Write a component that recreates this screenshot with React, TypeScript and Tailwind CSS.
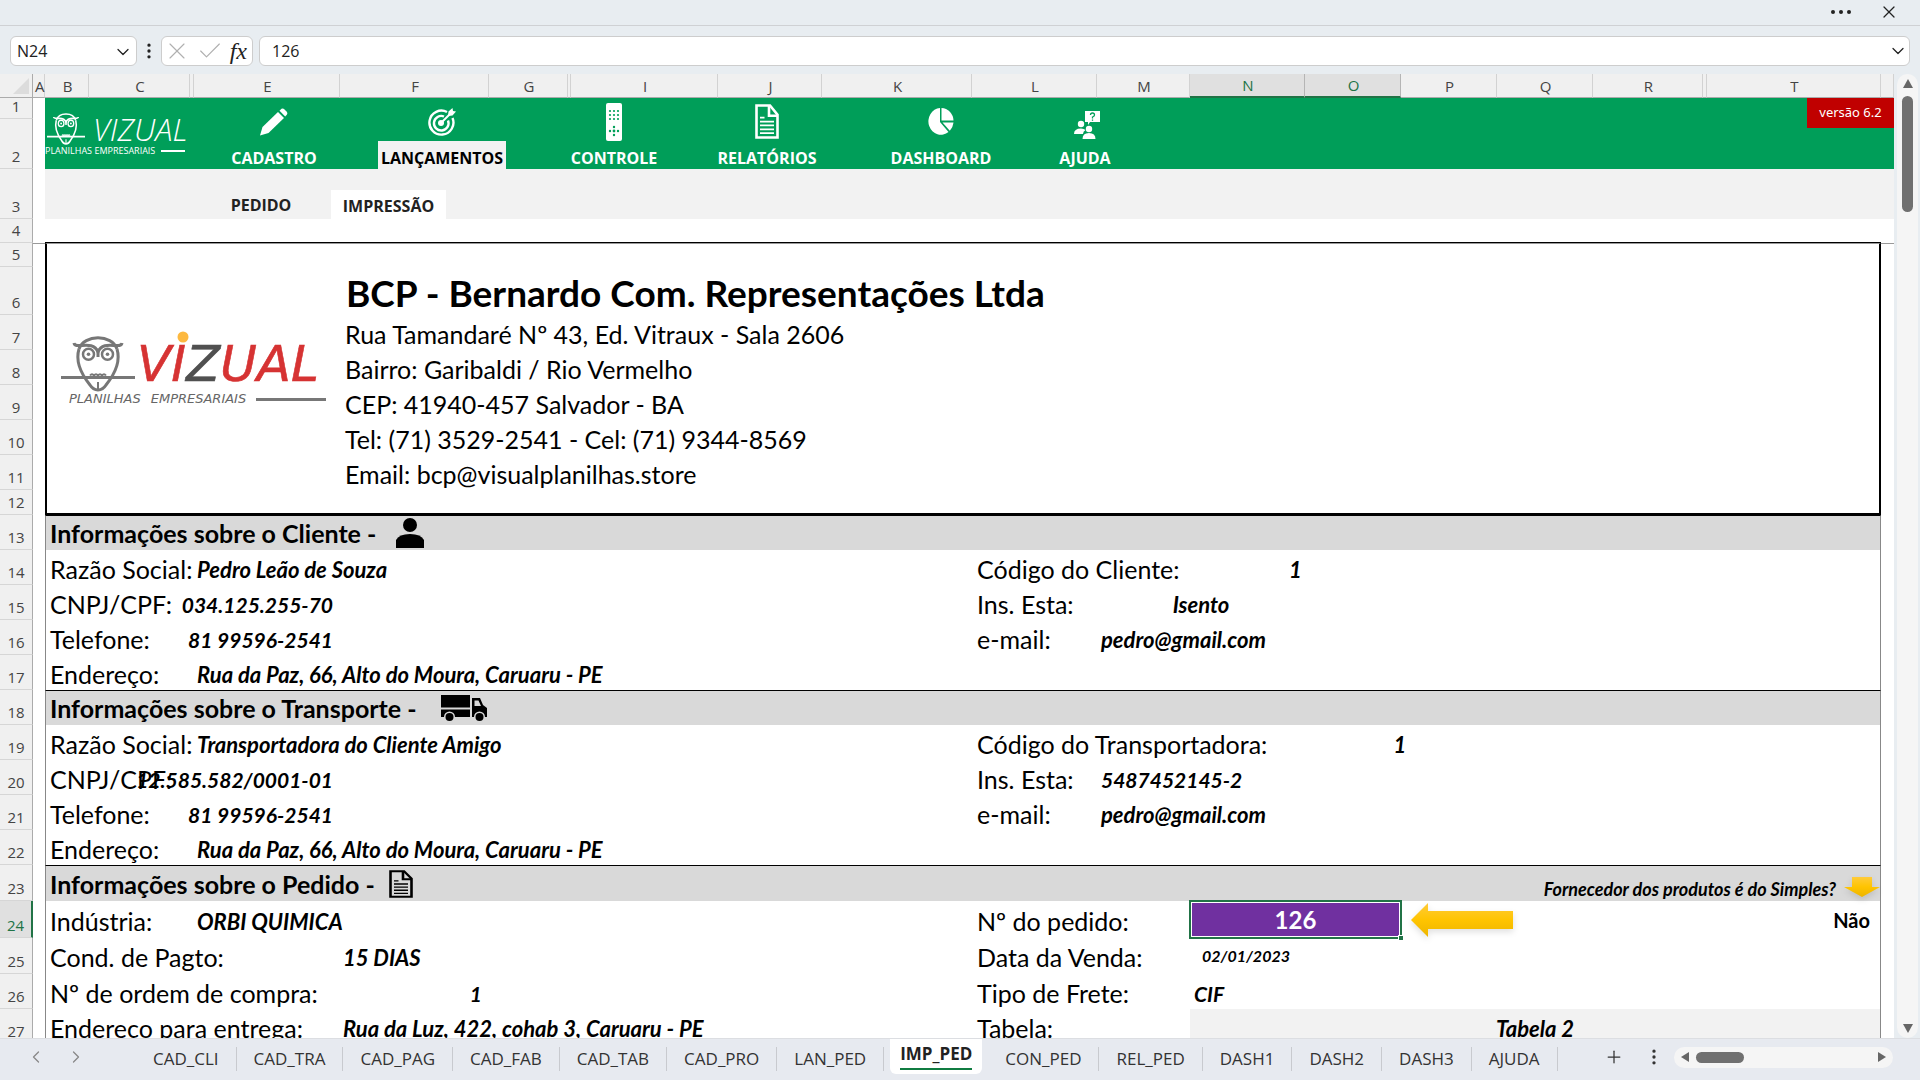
import type { ReactNode } from 'react';
import { Check, ChevronDown, ChevronLeft, ChevronRight, MoreVertical, Plus, X } from 'lucide-react';

const COLUMNS = [
  { name: 'A', width: 'w-[12px]' },
  { name: 'B', width: 'w-[44px]' },
  { name: 'C', width: 'w-[101px]' },
  { name: '', width: 'w-[4px]' },
  { name: 'E', width: 'w-[146px]' },
  { name: 'F', width: 'w-[149px]' },
  { name: 'G', width: 'w-[79px]' },
  { name: '', width: 'w-[3px]' },
  { name: 'I', width: 'w-[147px]' },
  { name: 'J', width: 'w-[104px]' },
  { name: 'K', width: 'w-[150px]' },
  { name: 'L', width: 'w-[125px]' },
  { name: 'M', width: 'w-[93px]' },
  { name: 'N', width: 'w-[115px]' },
  { name: 'O', width: 'w-[96px]' },
  { name: 'P', width: 'w-[96px]' },
  { name: 'Q', width: 'w-[96px]' },
  { name: 'R', width: 'w-[110px]' },
  { name: '', width: 'w-[4px]' },
  { name: 'T', width: '' },
  { name: '', width: 'w-[13px]' },
];

const SHEETS = [
  'CAD_CLI', 'CAD_TRA', 'CAD_PAG', 'CAD_FAB', 'CAD_TAB', 'CAD_PRO', 'LAN_PED',
  'IMP_PED', 'CON_PED', 'REL_PED', 'DASH1', 'DASH2', 'DASH3', 'AJUDA',
];

const COMPANY = [
  'Rua Tamandaré Nº 43, Ed. Vitraux - Sala 2606',
  'Bairro: Garibaldi / Rio Vermelho',
  'CEP: 41940-457 Salvador - BA',
  'Tel: (71) 3529-2541 - Cel: (71) 9344-8569',
  'Email: bcp@visualplanilhas.store',
];

const LABEL = "p-0 pt-0.5 font-['Lato',sans-serif] text-[25px] leading-8 whitespace-nowrap";
const VALUE = "p-0 pt-1 font-['Lato',sans-serif] leading-[30px] font-bold italic whitespace-nowrap";

function RowHead({ n, height, active }: { n: number; height: string; active?: boolean }) {
  return (
    <th
      scope="row"
      className={`${height} p-0 pb-1 align-bottom text-center text-[15px] leading-4 font-normal border-b border-[#d6d6d6] ${
        active ? 'bg-[#e0e0e0] text-[#217346] border-r-2 border-r-[#217346]' : 'bg-[#f0f0f0] text-[#444] border-r border-r-[#ababab]'
      }`}
    >
      {n}
    </th>
  );
}

function DocIcon({ className }: { className: string }) {
  return (
    <svg viewBox="0 0 24 36" preserveAspectRatio="none" className={className} fill="none" stroke="currentColor">
      <path d="M1.5 1.5H15L22.5 11V34.5H1.5Z" strokeWidth="2.6" />
      <path d="M14 2V12H22" strokeWidth="2.6" />
      <path d="M5 14H9.5M5 18H19M5 22H19M5 26H19M5 30H19" strokeWidth="1.8" />
    </svg>
  );
}

function Owl({ className }: { className: string }) {
  return (
    <svg viewBox="0 0 74 56" preserveAspectRatio="none" className={className} fill="none" stroke="currentColor" strokeWidth="3">
      <path d="M18 13C23-2 51-2 56 13" />
      <path d="M13 7C14 14 32 3 37 16C42 3 60 14 61 7" />
      <path d="M18 13C14 26 21 39 29 49C33 55.500 41 55.500 45 49C53 39 60 26 56 13" />
      <path d="M37 15V21" />
      <circle cx="27.500" cy="18.300" r="5.500" strokeWidth="2.500" />
      <circle cx="46.500" cy="18.300" r="5.500" strokeWidth="2.500" />
      <circle cx="27.500" cy="18.300" r="1.800" fill="currentColor" stroke="none" />
      <circle cx="46.500" cy="18.300" r="1.800" fill="currentColor" stroke="none" />
      <path d="M0 41.500H74" />
      <path d="M29 39.500q2-2.500 4 0q2-2.500 4 0q2-2.500 4 0q2-2.500 4 0M37 46V53" strokeWidth="2" />
    </svg>
  );
}

function PencilIcon() {
  return (
    <svg viewBox="0 0 28 28" className="h-7 w-7" fill="currentColor">
      <path d="M0 27.500L2.500 19L18 4L24 10L8.500 25Z" />
      <path d="M19.500 2.700L21.500 .8Q23 0 24.500 1.400L26.800 3.700Q28 5.200 26.800 6.700L25.200 8.500Z" />
    </svg>
  );
}

function TargetIcon() {
  return (
    <svg viewBox="0 0 28 28" className="h-7 w-7" fill="none" stroke="currentColor">
      <path d="M19 4A12 12 0 1 0 24.500 10" strokeWidth="2.4" />
      <path d="M16 8.500A7.300 7.300 0 1 0 20 12.500" strokeWidth="2.400" />
      <circle cx="13" cy="15" r="3" fill="currentColor" stroke="none" />
      <path d="M13 15L23 5" strokeWidth="2" />
      <path d="M20 8L20.500 3.500L24.500 0L25 3L28 3.500L24.500 7.500Z" fill="currentColor" stroke="none" />
    </svg>
  );
}

function RemoteIcon() {
  return (
    <svg viewBox="0 0 16 38" className="h-[38px] w-4">
      <rect width="16" height="38" rx="2" fill="#fff" />
      <g fill="#009e59">
        {[8, 12, 16].map((y) =>
          [4, 8, 12].map((x) => <circle key={`${x}-${y}`} cx={x} cy={y} r="1.100" />)
        )}
        <circle cx="8" cy="24" r="1.200" />
        <circle cx="8" cy="28" r="1.400" />
        <circle cx="8" cy="32" r="1.200" />
        <circle cx="4" cy="28" r="1.200" />
        <circle cx="12" cy="28" r="1.200" />
      </g>
    </svg>
  );
}

function PieIcon() {
  return (
    <svg viewBox="0 0 26 27" className="h-[27px] w-[26px]" fill="currentColor">
      <path d="M12 0V14L20.500 24A12.500 13.400 0 1 1 12 0Z" />
      <path d="M13.500 0A12.500 13 0 0 1 25.500 12.500H13.500Z" />
      <path d="M14.500 14.500H25.500Q25 19.500 21.800 22.800Z" />
    </svg>
  );
}

function HelpIcon() {
  return (
    <svg viewBox="0 0 26 28" className="mt-1.5 ml-1 h-7 w-[26px]" fill="currentColor">
      <path d="M11 0H26V11H16L14 14V11H11Z" />
      <path d="M16.500 4Q16.500 2 18.500 2T20.500 4Q20.500 5.300 18.500 6V7.500M18.500 8.500V9.800" fill="none" stroke="#009e59" strokeWidth="1.300" />
      <circle cx="7" cy="13" r="3.200" />
      <path d="M0 23Q0 17.500 7 17.500Q10 17.500 11.500 19Q9 20.500 9 23Z" />
      <circle cx="15" cy="18" r="3.200" />
      <path d="M8.500 28Q8.500 22 15 22T21.500 28Z" />
    </svg>
  );
}

const MENU: { label: string; icon: ReactNode; gap: string; active?: boolean }[] = [
  { label: 'CADASTRO', icon: <PencilIcon />, gap: '' },
  { label: 'LANÇAMENTOS', icon: <TargetIcon />, gap: 'ml-10', active: true },
  { label: 'CONTROLE', icon: <RemoteIcon />, gap: 'ml-11' },
  { label: 'RELATÓRIOS', icon: <DocIcon className="h-[35px] w-6" />, gap: 'ml-[25px]' },
  { label: 'DASHBOARD', icon: <PieIcon />, gap: 'ml-[46px]' },
  { label: 'AJUDA', icon: <HelpIcon />, gap: 'ml-4' },
];

function MainMenu() {
  return (
    <nav className="relative flex h-[71px] bg-[#009e59] text-white">
      <div className="w-[165px] pt-3.5">
        <div className="flex h-[34px] items-center">
          <Owl className="ml-0.5 h-8 w-[38px]" />
          <span className="ml-2 text-[31px] leading-[34px] font-light italic">VIZUAL</span>
        </div>
        <div className="flex items-center text-[9px] leading-[10px] whitespace-nowrap">
          PLANILHAS EMPRESARIAIS
          <span className="ml-1.5 h-0.5 w-6 bg-white" />
        </div>
      </div>
      {MENU.map((item) => (
        <button key={item.label} type="button" className={`flex w-32 flex-col items-center ${item.gap}`}>
          <span className="flex h-[43px] items-center pt-1">{item.icon}</span>
          <span
            className={`w-full pt-1.5 text-base leading-[22px] font-bold ${item.active ? 'bg-[#f2f2f2] text-black' : ''}`}
          >
            {item.label}
          </span>
        </button>
      ))}
      <span className="absolute top-0 right-0 h-[30px] w-[87px] bg-[#c00000] text-center font-['Noto_Sans',sans-serif] text-[13px] leading-7">
        versão 6.2
      </span>
    </nav>
  );
}

function CompanyLogo() {
  return (
    <div className="ml-3.5 w-[265px] font-['DejaVu_Sans',sans-serif]">
      <div className="flex items-end">
        <Owl className="h-14 w-[74px] text-[#777]" />
        <svg viewBox="0 0 190 61" className="h-[61px] w-[190px]">
          <text x="2" y="50" fontSize="50" fontStyle="italic" fontFamily="DejaVu Sans, sans-serif" fill="#d63333" stroke="#d63333" strokeWidth="0.600">
            VI<tspan fill="#505050" stroke="#505050">Z</tspan>UAL
          </text>
          <circle cx="48" cy="6" r="5.500" fill="#fdb940" />
        </svg>
      </div>
      <div className="flex items-center gap-2.5 pl-2 text-[13px] leading-[14px] italic text-[#666]">
        <span>PLANILHAS</span>
        <span>EMPRESARIAIS</span>
        <span className="h-[3px] flex-1 bg-[#777]" />
      </div>
    </div>
  );
}

function PersonIcon() {
  return (
    <svg viewBox="0 0 28 30" className="ml-5 h-[30px] w-7" fill="currentColor">
      <circle cx="14" cy="7" r="7" />
      <path d="M0 30V22Q3 16 14 16T28 22V30Z" />
    </svg>
  );
}

function TruckIcon() {
  return (
    <svg viewBox="0 0 46 26" className="ml-6 h-[26px] w-[46px]" fill="currentColor">
      <path d="M0 0H29V12.500H0ZM0 14.500H29V22H14A5.500 5.500 0 0 0 3 22H0Z" />
      <path d="M31 3H39L42 10L46 13V22H44A5.500 5.500 0 0 0 33 22H31ZM33.500 5.500V11H40L37.500 5.500Z" fillRule="evenodd" />
      <circle cx="8.500" cy="22" r="4" />
      <circle cx="38.500" cy="22" r="4" />
    </svg>
  );
}

function SectionTitle({ title, icon, children }: { title: string; icon: ReactNode; children?: ReactNode }) {
  return (
    <td colSpan={19} className="relative border-x border-t border-x-[#888] border-t-black bg-[#d9d9d9] p-0 align-middle">
      <h2 className="flex h-8 items-center pl-1 font-['Lato',sans-serif] text-[25px] leading-8 font-bold whitespace-nowrap">
        {title}
        {icon}
      </h2>
      {children}
    </td>
  );
}

type Field = { label: string; value: string; pos: 'E' | 'Eright' | 'F' | 'Fright' };
type RightField = { label?: string; value?: ReactNode };

function LeftCells({ label, value, pos }: Field) {
  const wide = pos === 'F' || pos === 'Fright';
  const right = pos === 'Eright' || pos === 'Fright';
  return (
    <>
      <td colSpan={wide ? 4 : 3} className={`max-w-0 border-l border-l-[#888] ${LABEL} pl-1`}>{label}</td>
      <td className={`max-w-0 ${VALUE} ${right ? 'pr-[7px] text-[21px]' : 'pl-[3px] text-[22px]'}`}>
        <div className={right ? 'flex justify-end' : ''}>{value}</div>
      </td>
      <td colSpan={wide ? 5 : 6} />
    </>
  );
}

function DataRow({ n, height = 'h-[35px]', left, right }: { n: number; height?: string; left: Field; right: ReactNode }) {
  return (
    <tr>
      <RowHead n={n} height={height} active={n === 24} />
      <td />
      <LeftCells {...left} />
      {right}
      <td />
    </tr>
  );
}

// cells from L to T: label, value and filler
function Right({ label, value, span, align = 'pl-1 text-[22px]' }: RightField & { span: number; align?: string }) {
  const start = label && label.length > 14 && span === 2 ? 2 : 1;
  const rest = 8 - (start - 1) - span;
  return (
    <>
      <td colSpan={start} className={`${LABEL} pl-[5px]`}>{label}</td>
      <td colSpan={span} className={`${VALUE} ${align}`}>{value}</td>
      <td colSpan={rest} className="border-r border-[#888]" />
    </>
  );
}

function YellowArrow({ className, points, box }: { className: string; points: string; box: string }) {
  return (
    <svg viewBox={box} className={`drop-shadow-md ${className}`}>
      <defs>
        <linearGradient id="gold" x1="0" y1="0" x2="0" y2="1">
          <stop offset="0" stopColor="#ffcb3a" />
          <stop offset="0.5" stopColor="#ffc400" />
          <stop offset="1" stopColor="#edb500" />
        </linearGradient>
      </defs>
      <polygon points={points} fill="url(#gold)" />
    </svg>
  );
}

function Sheet() {
  return (
    <table className="w-full table-fixed border-separate border-spacing-0 bg-white text-black">
      <colgroup>
        <col className="w-[33px]" />
        {COLUMNS.map((c, i) => (
          <col key={i} className={c.width} />
        ))}
      </colgroup>
      <thead>
        <tr>
          <th className="h-[24px] border-b border-r border-[#ababab] bg-[#f0f0f0] p-0">
            <svg viewBox="0 0 16 16" className="ml-auto mr-[3px] h-4 w-4" fill="#dcdcdc">
              <path d="M16 0V16H0Z" />
            </svg>
          </th>
          {COLUMNS.map((c, i) => (
            <th
              key={i}
              scope="col"
              className={`h-[24px] p-0 pl-0.5 text-center text-[15px] leading-[22px] font-normal ${
                c.name === 'N' || c.name === 'O'
                  ? 'border-r border-b-2 border-r-[#b5b5b5] border-b-[#217346] bg-[#e0e0e0] text-[#217346]'
                  : 'border-r border-b border-r-[#d2d2d2] border-b-[#ababab] bg-[#f0f0f0] text-[#444]'
              }`}
            >
              {c.name}
            </th>
          ))}
        </tr>
      </thead>
      <tbody>
        <tr>
          <RowHead n={1} height="h-[21px]" />
          <td />
          <td colSpan={20} rowSpan={2} className="p-0 align-top">
            <MainMenu />
          </td>
        </tr>
        <tr>
          <RowHead n={2} height="h-[50px]" />
          <td />
        </tr>
        <tr>
          <RowHead n={3} height="h-[50px]" />
          <td />
          <td colSpan={20} className="bg-[#f2f2f2] p-0 align-bottom">
            <nav className="flex items-end pl-[158px] text-base leading-[27px] font-bold text-[#222]">
              <button type="button" className="w-[116px] text-center">PEDIDO</button>
              <button type="button" className="ml-3 w-[115px] bg-white pt-1 leading-[25px]">IMPRESSÃO</button>
            </nav>
          </td>
        </tr>
        <tr>
          <RowHead n={4} height="h-[24px]" />
          <td />
          <td colSpan={19} className="border-b border-black" />
          <td />
        </tr>
        <tr>
          <RowHead n={5} height="h-[24px]" />
          <td className="border-t border-[#999]" />
          <td colSpan={4} rowSpan={8} className="border-t border-b-2 border-l-2 border-black border-t-[#999] p-0 pb-5">
            <CompanyLogo />
          </td>
          <td colSpan={15} className="border-t border-r-2 border-black border-t-[#999]" />
          <td className="border-t border-[#999]" />
        </tr>
        <tr>
          <RowHead n={6} height="h-[48px]" />
          <td />
          <td colSpan={15} className="border-r-2 border-black p-0 pt-1 pl-1.5">
            <h1 className="font-['Lato',sans-serif] text-[37px] leading-[44px] font-bold whitespace-nowrap">
              BCP - Bernardo Com. Representações Ltda
            </h1>
          </td>
          <td />
        </tr>
        {COMPANY.map((line, i) => (
          <tr key={line}>
            <RowHead n={7 + i} height="h-[35px]" />
            <td />
            <td colSpan={15} className={`border-r-2 border-black ${LABEL} pl-[5px]`}>{line}</td>
            <td />
          </tr>
        ))}
        <tr>
          <RowHead n={12} height="h-[25px]" />
          <td />
          <td colSpan={15} className="border-r-2 border-b-2 border-black" />
          <td />
        </tr>
        <tr>
          <RowHead n={13} height="h-[35px]" />
          <td />
          <SectionTitle title="Informações sobre o Cliente -" icon={<PersonIcon />} />
          <td />
        </tr>
        <DataRow n={14} left={{ label: 'Razão Social:', value: 'Pedro Leão de Souza', pos: 'E' }}
          right={<Right label="Código do Cliente:" value="1" span={2} align="text-center text-[22px]" />} />
        <DataRow n={15} left={{ label: 'CNPJ/CPF:', value: '034.125.255-70', pos: 'Eright' }}
          right={<Right label="Ins. Esta:" value="Isento" span={2} align="text-center text-[22px]" />} />
        <DataRow n={16} left={{ label: 'Telefone:', value: '81 99596-2541', pos: 'Eright' }}
          right={<Right label="e-mail:" value="pedro@gmail.com" span={4} />} />
        <DataRow n={17} left={{ label: 'Endereço:', value: 'Rua da Paz, 66, Alto do Moura, Caruaru - PE', pos: 'E' }}
          right={<Right span={4} />} />
        <tr>
          <RowHead n={18} height="h-[35px]" />
          <td />
          <SectionTitle title="Informações sobre o Transporte -" icon={<TruckIcon />} />
          <td />
        </tr>
        <DataRow n={19} left={{ label: 'Razão Social:', value: 'Transportadora do Cliente Amigo', pos: 'E' }}
          right={<Right label="Código do Transportadora:" value="1" span={6} align="text-center text-[22px]" />} />
        <DataRow n={20} left={{ label: 'CNPJ/CPF:', value: '12.585.582/0001-01', pos: 'Eright' }}
          right={<Right label="Ins. Esta:" value="5487452145-2" span={4} align="pl-1 text-[21px]" />} />
        <DataRow n={21} left={{ label: 'Telefone:', value: '81 99596-2541', pos: 'Eright' }}
          right={<Right label="e-mail:" value="pedro@gmail.com" span={4} />} />
        <DataRow n={22} left={{ label: 'Endereço:', value: 'Rua da Paz, 66, Alto do Moura, Caruaru - PE', pos: 'E' }}
          right={<Right span={4} />} />
        <tr>
          <RowHead n={23} height="h-[36px]" />
          <td />
          <SectionTitle title="Informações sobre o Pedido -" icon={<DocIcon className="ml-3.5 h-7 w-6" />}>
            <div className="absolute right-0 bottom-0 flex items-center gap-2 font-['Lato',sans-serif] text-lg leading-6 font-bold italic">
              Fornecedor dos produtos é do Simples?
              <YellowArrow className="mb-1 h-5 w-9" box="0 0 36 20" points="8,0 28,0 28,10 36,10 18,20 0,10 8,10" />
            </div>
          </SectionTitle>
          <td />
        </tr>
        <DataRow n={24} height="h-[37px]" left={{ label: 'Indústria:', value: 'ORBI QUIMICA', pos: 'E' }}
          right={
            <>
              <td colSpan={2} className={`${LABEL} pl-[5px]`}>Nº do pedido:</td>
              <td colSpan={2} className="relative p-0">
                <div className="absolute -top-px -right-px -bottom-px -left-px border-2 border-[#217346] bg-white p-px">
                  <div className="flex h-full items-center justify-center bg-[#7030a0] font-['Lato',sans-serif] text-2xl font-bold text-white">
                    126
                  </div>
                </div>
                <span className="absolute -right-0.5 -bottom-0.5 h-[5px] w-[5px] border-t border-l border-white bg-[#217346]" />
              </td>
              <td colSpan={5} className="border-r border-[#888] p-0">
                <div className="flex items-center justify-between px-2.5">
                  <YellowArrow className="h-[34px] w-[102px]" box="0 0 102 34" points="0,17 17,0 17,8 102,8 102,26 17,26 17,34" />
                  <span className="font-['Lato',sans-serif] text-xl font-bold">Não</span>
                </div>
              </td>
            </>
          } />
        <DataRow n={25} height="h-[36px]" left={{ label: 'Cond. de Pagto:', value: '15 DIAS', pos: 'F' }}
          right={
            <>
              <td colSpan={2} className={`${LABEL} pl-[5px]`}>Data da Venda:</td>
              <td colSpan={7} className="border-r border-[#888] p-0 pl-3 font-['Lato',sans-serif] text-base leading-7 font-bold italic">
                02/01/2023
              </td>
            </>
          } />
        <DataRow n={26} left={{ label: 'Nº de ordem de compra:', value: '1', pos: 'Fright' }}
          right={
            <>
              <td colSpan={2} className={`${LABEL} pl-[5px]`}>Tipo de Frete:</td>
              <td colSpan={7} className={`border-r border-[#888] ${VALUE} pl-1 text-[21px]`}>CIF</td>
            </>
          } />
        <DataRow n={27} left={{ label: 'Endereço para entrega:', value: 'Rua da Luz, 422, cohab 3, Caruaru - PE', pos: 'F' }}
          right={
            <>
              <td colSpan={2} className={`${LABEL} pl-[5px]`}>Tabela:</td>
              <td colSpan={7} className={`border-r border-[#888] bg-[#f2f2f2] text-center text-[22px] ${VALUE}`}>Tabela 2</td>
            </>
          } />
      </tbody>
    </table>
  );
}

function FormulaBar() {
  return (
    <div className="flex h-[49px] shrink-0 items-center border-t border-[#cfd1d4] pt-0.5 pr-2.5 pl-2.5 text-base text-[#222]">
      <div className="flex h-[30px] w-[127px] items-center rounded-md border border-[#cdcdcd] bg-white">
        <input aria-label="Caixa de nome" defaultValue="N24" className="w-0 flex-1 pl-1.5 outline-none" />
        <button type="button" aria-label="Abrir lista de nomes" className="pt-0.5 pr-[3px]">
          <ChevronDown className="h-5 w-5" strokeWidth={1.5} />
        </button>
      </div>
      <MoreVertical className="mx-0.5 h-5 w-5" fill="currentColor" />
      <div className="flex h-[30px] w-[92px] items-center justify-between rounded-md border border-[#cdcdcd] bg-white px-px">
        <button type="button" aria-label="Cancelar"><X className="h-7 w-7 text-[#b0b0b0]" strokeWidth={1} /></button>
        <button type="button" aria-label="Inserir"><Check className="h-7 w-7 text-[#b0b0b0]" strokeWidth={1} /></button>
        <button type="button" className="pr-1 font-['Liberation_Serif',serif] text-2xl leading-6 italic">fx</button>
      </div>
      <div className="ml-1.5 flex h-[30px] flex-1 items-center rounded-md border border-[#cdcdcd] bg-white">
        <input aria-label="Barra de fórmulas" defaultValue="126" className="w-0 flex-1 pl-3 outline-none" />
        <button type="button" aria-label="Expandir" className="pr-px">
          <ChevronDown className="h-5 w-5" strokeWidth={1.5} />
        </button>
      </div>
    </div>
  );
}

function Triangle({ className, d }: { className: string; d: string }) {
  return (
    <svg viewBox="0 0 12 12" className={className} fill="#666">
      <path d={d} />
    </svg>
  );
}

function SheetTabs() {
  return (
    <footer className="flex h-[42px] shrink-0 items-start border-t border-[#dcdee2] bg-[#e7eaf0] text-[17px] text-[#333]">
      <div className="flex h-9 w-[136px] items-center pl-[26px] text-[#888]">
        <button type="button" aria-label="Planilha anterior"><ChevronLeft className="h-5 w-5" strokeWidth={1.5} /></button>
        <button type="button" aria-label="Próxima planilha" className="ml-5"><ChevronRight className="h-5 w-5" strokeWidth={1.5} /></button>
      </div>
      {SHEETS.map((name) =>
        name === 'IMP_PED' ? (
          <button key={name} type="button" className="mx-1.5 h-[35px] rounded-b-md bg-white px-2.5 pb-1 font-bold text-[#222]">
            <span className="block border-b-2 border-[#107c41] leading-7">{name}</span>
          </button>
        ) : (
          <button key={name} type="button" className="mt-2 h-6 border-r border-[#c8cacf] px-[17px] leading-6">
            {name}
          </button>
        )
      )}
      <div className="ml-auto flex h-9 items-center">
        <button type="button" aria-label="Nova planilha"><Plus className="h-5 w-5" strokeWidth={1.5} /></button>
        <MoreVertical className="ml-5 h-5 w-5" fill="currentColor" />
        <div className="mr-[27px] ml-2.5 flex h-[21px] w-[219px] items-center rounded-full bg-[#f5f5f5] px-1.5">
          <Triangle className="h-3 w-3" d="M9 1V11L1 6Z" />
          <span className="ml-1 h-[11px] w-12 rounded-full bg-[#707070]" />
          <Triangle className="ml-auto h-3 w-3" d="M3 1V11L11 6Z" />
        </div>
      </div>
    </footer>
  );
}

export default function App() {
  return (
    <div className="flex h-screen flex-col overflow-hidden bg-[#e8edf1] font-['Open_Sans',sans-serif]">
      <header className="flex h-[25px] shrink-0 items-center justify-end pr-[21px] pb-0.5 text-[#222]">
        <button type="button" aria-label="Mais opções" className="mr-7 flex gap-1">
          <span className="h-1 w-1 rounded-full bg-[#222]" />
          <span className="h-1 w-1 rounded-full bg-[#222]" />
          <span className="h-1 w-1 rounded-full bg-[#222]" />
        </button>
        <button type="button" aria-label="Fechar"><X className="h-5 w-5" strokeWidth={1.5} /></button>
      </header>
      <FormulaBar />
      <main className="flex min-h-0 flex-1">
        <div className="flex-1 overflow-hidden">
          <Sheet />
        </div>
        <div className="mr-0.5 ml-[3px] flex w-[21px] flex-col items-center rounded-full bg-[#f5f5f5] py-1">
          <Triangle className="h-3 w-3" d="M6 1L11 10H1Z" />
          <span className="mt-1.5 h-[116px] w-[11px] rounded-full bg-[#707070]" />
          <Triangle className="mt-auto h-3 w-3" d="M6 11L11 2H1Z" />
        </div>
      </main>
      <SheetTabs />
    </div>
  );
}
